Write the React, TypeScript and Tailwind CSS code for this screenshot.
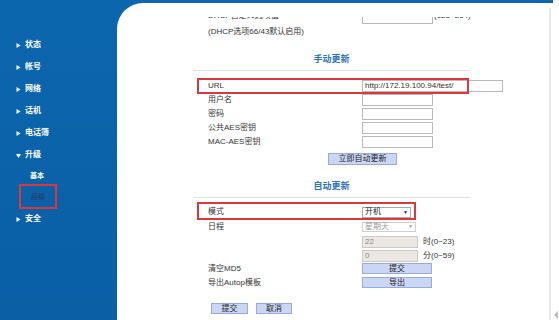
import type { ReactNode } from "react";

const menu = [
  { label: "状态" },
  { label: "帐号" },
  { label: "网络" },
  { label: "话机" },
  { label: "电话簿" },
  { label: "升级", open: true },
];

function Arrow({ down }: { down?: boolean }) {
  return (
    <svg width="5" height="5" viewBox="0 0 5 5" className="ml-[16px] mr-[4px] shrink-0">
      {down ? <polygon points="0,1 5,1 2.5,5" fill="#fff" /> : <polygon points="0.5,0 4.5,2.5 0.5,5" fill="#fff" />}
    </svg>
  );
}

function Row({
  label,
  className = "h-[14px]",
  labelClass = "",
  children,
}: {
  label?: string;
  className?: string;
  labelClass?: string;
  children?: ReactNode;
}) {
  return (
    <div className={`ml-[4px] flex items-center ${className}`}>
      <div className={`w-[165px] shrink-0 pl-[11px] text-[8px] leading-none text-[#333] ${labelClass}`}>{label}</div>
      {children}
    </div>
  );
}

function Input({ value, w = "w-[71px]", disabled }: { value?: string; w?: string; disabled?: boolean }) {
  return (
    <div
      className={`flex h-[12px] items-center border px-[2px] text-[8px] leading-none ${w} ${
        disabled ? "border-[#c9c9c9] bg-[#ebe8e3] text-[#888]" : "border-[#b8b8b8] bg-white text-[#333]"
      }`}
    >
      {value}
    </div>
  );
}

function Btn({ children, w }: { children: ReactNode; w: string }) {
  return (
    <div className={`flex h-[11px] items-center justify-center border border-[#98aad8] bg-[#cad6f4] text-[8px] leading-none text-[#222] ${w}`}>
      {children}
    </div>
  );
}

function Heading({ children }: { children: ReactNode }) {
  return (
    <>
      <div className="flex h-[14px] w-[277px] items-center justify-center text-[9px] font-bold text-[#2e72c0]">{children}</div>
      <div className="mt-[3px] h-px w-[277px] bg-[#e6dfdf]" />
    </>
  );
}

export default function App() {
  return (
    <div className="flex h-[320px] w-[559px] overflow-hidden bg-white font-['Liberation_Sans','Noto_Sans_CJK_SC',sans-serif]">
      <div className="flex w-[554px] bg-gradient-to-b from-[#0c66ae] to-[#0a5fa5]">
        {/* menu */}
        <aside className="w-[117px] shrink-0 pt-[34px] text-[8px] font-bold text-white">
          {menu.map((m) => (
            <div key={m.label} className="flex h-[22px] items-center">
              <Arrow down={m.open} />
              <span>{m.label}</span>
            </div>
          ))}
          <div className="flex h-[21px] items-center pl-[30px] text-[7px]">基本</div>
          <div className="relative flex h-[21px] items-center pl-[31px] text-[7px] text-[#23446f]">
            高级
            <div className="absolute -bottom-[1px] -top-[3px] left-[19px] w-[38px] border-2 border-[#d8393f]" />
          </div>
          <div className="flex h-[22px] items-center">
            <Arrow />
            <span>安全</span>
          </div>
        </aside>

        <div className="flex flex-1 flex-col pt-[3px]">
          <div className="flex flex-1 rounded-tl-[26px] bg-white">
            <main className="flex-1 overflow-hidden pt-[14px]">
              <div className="h-full overflow-hidden pl-[76px]">
                <div className="-mt-[6px]">
                  {/* row scrolled partly out of view */}
                  <Row label="DHCP自定义选项值" labelClass="pb-[4px]">
                    <Input />
                    <span className="mb-[4px] ml-[1px] text-[8px] leading-none text-[#333]">(128~254)</span>
                  </Row>
                  <Row label="(DHCP选项66/43默认启用)" />

                  <div className="mt-[14px]">
                    <Heading>手动更新</Heading>
                  </div>

                  <div className="relative mt-[7px]">
                    <Row label="URL" className="h-[15px]">
                      <Input value="http://172.19.100.94/test/" w="w-[141px]" />
                    </Row>
                    <div className="absolute -bottom-[1px] left-[4px] top-0 w-[272px] border-2 border-[#d8393f]" />
                  </div>
                  <Row label="用户名"><Input /></Row>
                  <Row label="密码"><Input /></Row>
                  <Row label="公共AES密钥"><Input /></Row>
                  <Row label="MAC-AES密钥"><Input /></Row>

                  <div className="ml-[135px] mt-[4px]">
                    <Btn w="w-[69px] h-[12px]">立即自动更新</Btn>
                  </div>

                  <div className="mt-[15px]">
                    <Heading>自动更新</Heading>
                  </div>

                  <div className="relative mt-[7px]">
                    <Row label="模式">
                      <div className="flex h-[11px] w-[49px] items-center justify-between border border-[#a9a9a9] px-[2px] text-[8px] leading-none text-[#222]">
                        <span>开机</span>
                        <span className="text-[5px]">▼</span>
                      </div>
                    </Row>
                    <div className="absolute -bottom-[1px] -top-[3px] left-[4px] w-[219px] border-2 border-[#d8393f]" />
                  </div>
                  <Row label="日程" className="h-[15px]">
                    <div className="flex h-[10px] w-[54px] items-center justify-between border border-[#cfcfcf] px-[2px] text-[8px] leading-none text-[#9a9a9a]">
                      <span>星期天</span>
                      <span className="text-[5px]">▼</span>
                    </div>
                  </Row>
                  <Row className="h-[15px]">
                    <Input value="22" w="w-[56px] h-[11px]" disabled />
                    <span className="ml-[5px] text-[8px] text-[#333]">时(0~23)</span>
                  </Row>
                  <Row className="h-[13px]">
                    <Input value="0" w="w-[56px] h-[11px]" disabled />
                    <span className="ml-[5px] text-[8px] text-[#333]">分(0~59)</span>
                  </Row>
                  <Row label="清空MD5" className="h-[13px]">
                    <Btn w="w-[70px]">提交</Btn>
                  </Row>
                  <Row label="导出Autop模板" className="h-[15px]">
                    <Btn w="w-[70px]">导出</Btn>
                  </Row>

                  <div className="ml-[18px] mt-[13px] flex gap-[8px]">
                    <Btn w="w-[37px]">提交</Btn>
                    <Btn w="w-[36px]">取消</Btn>
                  </div>
                </div>
              </div>
            </main>
            <div className="mt-[5px] w-[2px] bg-[#e8e8e8]" />
            <div className="w-[2px]" />
          </div>
        </div>
      </div>
      <div className="flex flex-1 flex-col justify-end">
        <svg width="5" height="8" viewBox="0 0 5 8" className="mb-[1px] ml-[1px]">
          <polygon points="4,0 0,4 4,8" fill="#b9b9b9" />
        </svg>
      </div>
    </div>
  );
}
